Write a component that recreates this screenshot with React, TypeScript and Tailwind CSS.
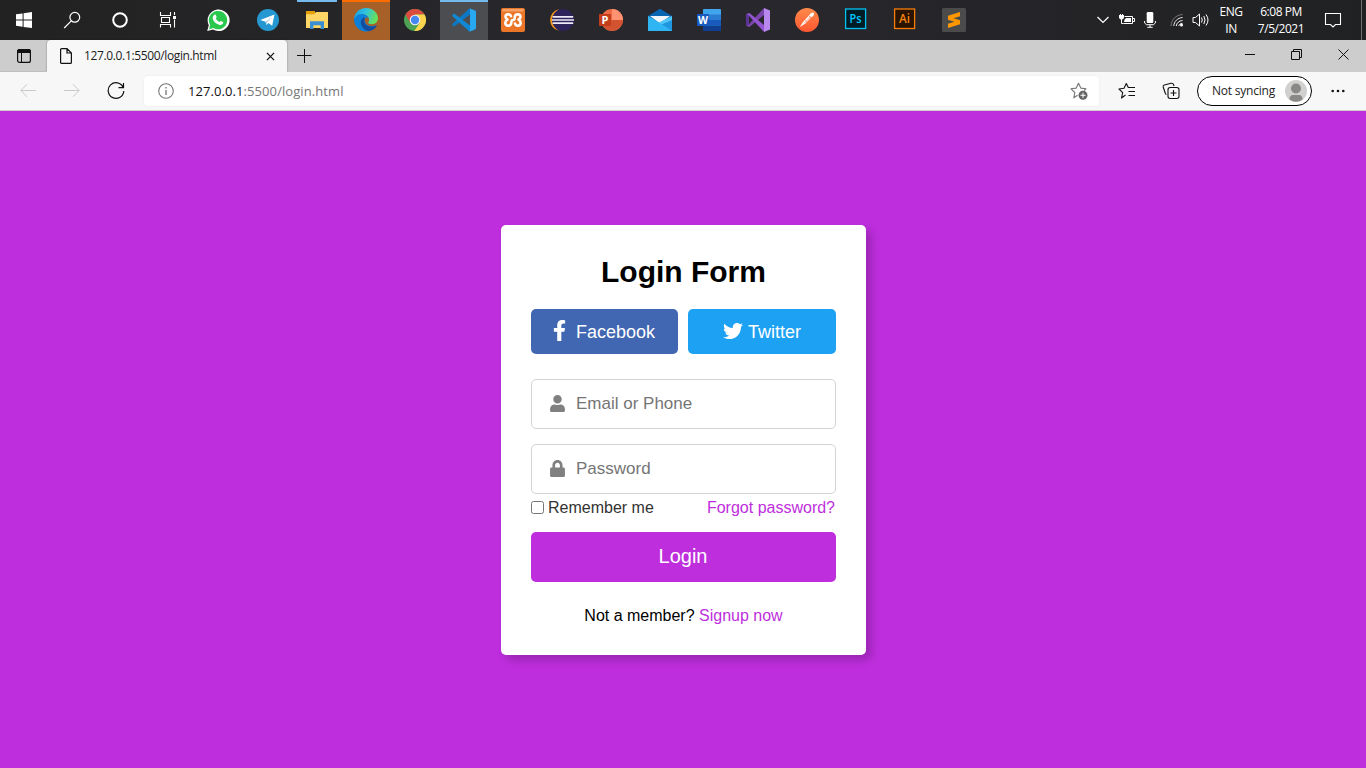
import type { ReactNode } from "react";
import { FaFacebookF, FaTwitter, FaUser, FaLock } from "react-icons/fa";

function Glyph({ children, className = "" }: { children: ReactNode; className?: string }) {
  return (
    <svg viewBox="0 0 24 24" className={"block h-6 w-6 shrink-0 " + className} fill="none">
      {children}
    </svg>
  );
}

function Cell({ children, className = "" }: { children: ReactNode; className?: string }) {
  return <div className={"flex h-10 w-12 shrink-0 items-center justify-center " + className}>{children}</div>;
}

function Taskbar() {
  return (
    <header className="flex h-10 w-full bg-linear-to-r from-[#222222] via-[#29282e] to-[#202122] font-['Open_Sans',sans-serif] text-white">
      <div className="flex">
        <Cell>
          <Glyph>
            <path d="M4 6.3 10.6 5.4V11.5H4zM11.6 5.2 20 4V11.5H11.6zM4 12.5H10.6V18.7L4 17.8zM11.6 12.5H20V20L11.6 18.9z" fill="#fff" />
          </Glyph>
        </Cell>
        <Cell>
          <Glyph>
            <circle cx="14.8" cy="9.3" r="4.9" stroke="#fff" strokeWidth="1.2" />
            <path d="M11.3 12.8 4.2 20" stroke="#fff" strokeWidth="1.2" />
          </Glyph>
        </Cell>
        <Cell>
          <Glyph>
            <circle cx="12" cy="12" r="6.8" stroke="#fff" strokeWidth="2" />
          </Glyph>
        </Cell>
        <Cell>
          <Glyph>
            <path d="M4.5 4V7.5H14.5V4M4.5 19.500V16.500H14.500V19.500M5.500 9.500H13.500V14.500H5.500zM18.500 4V7M18.500 11.500V19.500" stroke="#fff" strokeWidth="1.1" />
            <path d="M17 8H20V11H17z" fill="#fff" />
          </Glyph>
        </Cell>
      </div>
      <div className="ml-[3px] flex gap-px">
        <Cell>
          <Glyph className="-translate-x-px">
            <path d="M1.200 23 2.800 17.200A11 10.800 0 1 1 7 21.600z" fill="#fff" />
            <path d="M3 21.200 4.200 17A9.200 9.200 0 1 1 7.400 20.100z" fill="#2ac84d" />
            <path d="M8.300 6.800c.5-.5 1.200-.4 1.500.2l.8 1.900c.2.6-.8 1.300-.8 1.700.7 1.500 1.900 2.600 3.500 3.300.5.100 1.100-1.200 1.600-1l2.100 1c.4.200.3.900.1 1.400-.7 1.500-2.500 1.900-4 1.400-3.200-1-5.600-3.300-6.300-6-.3-1.500.4-3 1.500-3.900z" fill="#fff" />
          </Glyph>
        </Cell>
        <Cell>
          <Glyph>
            <circle cx="12" cy="12" r="11" fill="#2598d2" />
            <path d="M4.300 12 18.500 6.500 16.200 17.800 12.300 15.100 10.400 17.100 9.600 13.700z" fill="#fff" />
            <path d="M9.600 13.700 15.800 8.900 10.900 14.500 10.400 17.100z" fill="#a8cde2" />
          </Glyph>
        </Cell>
        <Cell className="relative">
          <div className="absolute left-1 top-0 h-[2px] w-10 bg-[#76b9ed]" />
          <Glyph>
            <path d="M1 3H10V7H1z" fill="#e3a008" />
            <path d="M1 6.200H9L11 4H23V20H1z" fill="#fdd665" />
            <path d="M5 13.300H19V21H15.500V17.500H8.500V21H5z" fill="#3a8fd3" />
            <path d="M8.500 17.500H15.500V20H8.500z" fill="#fdd665" />
          </Glyph>
        </Cell>
        <Cell className="relative bg-[#a86029]">
          <div className="absolute left-0 top-0 h-[2px] w-12 bg-[#ff6d00]" />
          <Glyph>
            <defs>
              <linearGradient id="edge-top" x1="0" y1="0" x2="1" y2="0.300">
                <stop offset="0" stopColor="#1797e0" />
                <stop offset=".5" stopColor="#2fc2df" />
                <stop offset="1" stopColor="#66e05d" />
              </linearGradient>
            </defs>
            <path d="M0 12C0 7 4 5 8 6c5 0 7 3 6.500 6.500L14 15.500Q16.500 18 22.800 16.800A12 12 0 0 1 0 12z" fill="#0c7fd8" />
            <path d="M0 12C0 5 5 0 12 0c7 0 12 5 12 10 0 4-3 6.300-6.600 6.300-2.200 0-3.600-.7-3.400-1.500.3-.8 1-1.300 1-2.800C15 8 11.500 5.700 7.800 5.900 3.500 6 .5 9 0 12z" fill="url(#edge-top)" />
            <path d="M9.500 9.700C6 11.500 6 16 9 20c3.200 3.800 9 4.500 13.600-1.800.3-.5 0-.9-.6-.6C18 19.300 13.500 18.800 11.500 16.300 10 14.500 9.800 12 11.200 9.800z" fill="#124e9f" />
            <path d="M12 9.600c-2 1.800-1.500 5.100.500 6.600 2.500 2.200 6.500 2.200 9.800 1L23 15.200C20.600 17 16 17 14.200 15.300c-.7-.7.8-1.400.8-3.500-.3-1.300-1.400-2.400-3-2.200z" fill="#a86029" />
          </Glyph>
        </Cell>
        <Cell>
          <Glyph>
            <circle cx="12" cy="12" r="11" fill="#4ca354" />
            <path d="M2.500 6.500A11 11 0 0 1 21.500 6.500H12L7.200 14.700z" fill="#dc4b3e" />
            <path d="M21.500 6.500A11 11 0 0 1 11.300 23L16.800 14.700 12 6.500z" fill="#fdd44b" />
            <circle cx="12" cy="12" r="5.300" fill="#f2f2f2" />
            <circle cx="12" cy="12" r="4.200" fill="#4688f1" />
          </Glyph>
        </Cell>
        <Cell className="relative bg-[#4c4d50]">
          <div className="absolute left-0 top-0 h-[2px] w-12 bg-[#76b9ed]" />
          <Glyph>
            <path d="M18 0V6.600L2.500 18.200Q1.500 18.600.5 17.400 0 16.300.8 15.500z" fill="#0a78c2" />
            <path d="M2.500 5.800Q1.500 5.400.5 6.600 0 7.700.8 8.500L18 24V17.400z" fill="#1188d3" />
            <path d="M17.500.2 23 2.600Q24 3 24 4V20Q24 21 23 21.400L17.500 23.800Q18 23.500 18 22V2Q18 .5 17.500.2z" fill="#29a8f2" />
          </Glyph>
        </Cell>
        <Cell>
          <Glyph>
            <rect width="24" height="24" rx="2" fill="#ec7628" />
            <path d="M1.500 1H22.500V3.500H1.500z" fill="#f4a069" />
            <path
              d="M10 8.200Q9.500 6.200 7 6.200 4.500 6.300 4.500 8.800 4.500 10.500 6.500 11.500 4.300 12.700 4.300 15 4.500 17.700 7.200 17.700 10.200 17.600 10.300 14.500 10.300 12 12 12 13.800 11.800 13.800 9.200 14 6.200 16.700 6.200 19.500 6.300 19.500 8.800 19.500 10.500 17.500 11.500 19.700 12.700 19.700 15 19.500 17.700 16.800 17.700 14.400 17.600 14 15.500"
              stroke="#fff"
              strokeWidth="2.600"
              strokeLinecap="round"
              strokeLinejoin="round"
            />
          </Glyph>
        </Cell>
        <Cell>
          <Glyph>
            <path d="M9 1.200A11 11 0 0 0 9 22.800 14 14 0 0 1 9 1.200z" fill="#f79a18" />
            <circle cx="13" cy="12" r="11" fill="#2e235b" />
            <path d="M2.600 8.800H23.200M2 12H24M2.600 15.200H23.200" stroke="#eeeaf5" strokeWidth="1.700" />
          </Glyph>
        </Cell>
        <Cell>
          <Glyph>
            <circle cx="13" cy="12" r="11" fill="#ed6c47" />
            <path d="M13 1A11 11 0 0 1 24 12H13z" fill="#ff9270" />
            <path d="M24 12A11 11 0 0 1 2.400 14.500L13 12z" fill="#d35230" />
            <rect y="6" width="12" height="12" rx=".8" fill="#c43e1c" />
            <text x="6" y="15.800" fontSize="11" fontWeight="700" textAnchor="middle" fill="#fff">P</text>
          </Glyph>
        </Cell>
        <Cell>
          <Glyph>
            <path d="M0 8 12 .8 24 8 12 16z" fill="#0865b2" />
            <path d="M2 8H22L12 15.500z" fill="#f1f5f9" />
            <path d="M0 8 12 15 24 8V23H0z" fill="#35b8f1" />
            <path d="M24 8V23L11 14.700z" fill="#2196e0" />
            <path d="M0 8 24 23H0z" fill="#2fb4f4" />
            <path d="M11 14.800 24 8V12L13.500 16.500z" fill="#4fc6fa" />
          </Glyph>
        </Cell>
        <Cell>
          <Glyph>
            <rect x="6" y="1" width="18" height="22" rx=".8" fill="#41a5ee" />
            <path d="M6 6.500H24V12H6z" fill="#2b7cd3" />
            <path d="M6 12H24V17.500H6z" fill="#185abd" />
            <path d="M6 17.500H24V23H6z" fill="#103f91" />
            <rect y="6" width="12" height="12" rx=".8" fill="#185abd" />
            <text x="6" y="15.800" fontSize="11" fontWeight="700" textAnchor="middle" fill="#fff" textLength="10" lengthAdjust="spacingAndGlyphs">W</text>
          </Glyph>
        </Cell>
        <Cell>
          <Glyph>
            <path d="M0 6.500 2.500 5.300 3 8.500V15.500L2.500 18.700 0 17.500z" fill="#5b3295" />
            <path d="M18 0V7L4 18.500Q3 19.200 2 18.600L0 17.500Q1.500 17.800 2.500 16.800z" fill="#7a45ad" />
            <path d="M18 24V17L4 5.500Q3 4.800 2 5.400L0 6.500Q1.500 6.200 2.500 7.200z" fill="#9454d1" />
            <path d="M18 0 24 2.500V21.500L18 24z" fill="#b888ee" />
          </Glyph>
        </Cell>
        <Cell>
          <Glyph>
            <defs>
              <linearGradient id="pm" x1="0" y1="0" x2="0" y2="1">
                <stop offset="0" stopColor="#ff8a4a" />
                <stop offset="1" stopColor="#ff5630" />
              </linearGradient>
            </defs>
            <circle cx="12" cy="12" r="12" fill="url(#pm)" />
            <path d="M4.800 19 8 14 14 7.500Q15 5.500 17 4.700 18.500 4.300 19 5.500 19.300 7 17.500 8.500L16 9.500 10.500 15.500z" fill="#fff" />
            <path d="M9 15.500 15.500 8.500M13.500 7.500 16 9.800M10.500 12.500 12.500 14.500" stroke="#fb7a50" strokeWidth=".7" />
          </Glyph>
        </Cell>
        <Cell>
          <Glyph>
            <rect x="1.600" y="1" width="20" height="19.500" fill="#001d26" stroke="#00c3f4" strokeWidth="1.300" />
            <text x="11.600" y="15" fontSize="12" fontWeight="600" textAnchor="middle" fill="#00c8ff" textLength="12" lengthAdjust="spacingAndGlyphs">Ps</text>
          </Glyph>
        </Cell>
        <Cell>
          <Glyph>
            <rect x="1.600" y="1" width="20" height="19.500" fill="#281400" stroke="#f57c08" strokeWidth="1.300" />
            <text x="11.600" y="15" fontSize="12" fontWeight="600" textAnchor="middle" fill="#f58212" textLength="11" lengthAdjust="spacingAndGlyphs">Ai</text>
          </Glyph>
        </Cell>
        <Cell>
          <Glyph>
            <rect width="24" height="24" rx="1.500" fill="#4b4b4b" />
            <path d="M6 7.700 18 4V8.200L11.500 10.300 18 12.300V16.200L6 20V15.800L12.500 13.700 6 11.700z" fill="#ff9800" />
          </Glyph>
        </Cell>
      </div>
      <div className="ml-auto flex items-center">
        <svg viewBox="0 0 12 12" className="mr-2.5 h-3 w-3" fill="none">
          <path d="M.5 3 6 8.500 11.500 3" stroke="#fff" strokeWidth="1.200" />
        </svg>
        <svg viewBox="0 0 16 12" className="mr-[9px] h-3 w-4" fill="none">
          <path d="M5.500 2.500H13.500V9.500H4.500M13.500 4.500H15.500V7.500H13.500M1.500 -1V2M3.500 -1V2M2.500 5V9.500H4.500" stroke="#fff" strokeWidth="1" />
          <path d="M0 1H5V4L3.500 5.500H1.500L0 4zM7 4H12V8H5Q5 5.500 7 4z" fill="#fff" />
        </svg>
        <svg viewBox="0 0 12 16" className="mr-[14px] h-4 w-3" fill="none">
          <rect x="2.700" y="0" width="6.600" height="11" rx="1.300" fill="#fff" />
          <path d="M.6 9V11L2.500 12.700H9.500L11.400 11V9M6 12.700V15.300M3.300 15.300H8.700" stroke="#fff" />
        </svg>
        <svg viewBox="0 0 14 14" className="mr-2 h-3.5 w-3.5" fill="none">
          <path d="M1 13C1.300 6.500 6 2 12.500 1.500" stroke="#777" />
          <path d="M3.800 13C4 8.500 7.500 5 12.500 4.500M6.300 13C6.500 10 9 7.800 12.500 7.500M8.800 13C9 11.500 10.500 10.500 12.500 10.300" stroke="#eee" />
          <circle cx="11.500" cy="12" r="1.500" fill="#fff" />
        </svg>
        <svg viewBox="0 0 18 14" className="mr-[7px] h-3.5 w-[18px]" fill="none">
          <path d="M1 4.500H3.500L7.500 1V13L3.500 9.500H1zM9.500 4.500Q11 7 9.500 9.500M11.800 3Q14.300 7 11.800 11M14 1.500Q18 7 14 12.500" stroke="#fff" />
        </svg>
        <div className="mr-3 w-7 text-center text-xs leading-[17px] tracking-[-0.4px]">
          <div>ENG</div>
          <div>IN</div>
        </div>
        <div className="mr-[19px] w-12 whitespace-nowrap text-center text-xs leading-[17px] tracking-[-0.45px]">
          <div className="-mt-px">6:08 PM</div>
          <div>7/5/2021</div>
        </div>
        <svg viewBox="0 0 18 18" className="mr-[19px] h-[18px] w-[18px]" fill="none">
          <path d="M1.500 2.500H16.500V13.500H11.500L9 16 6.500 13.500H1.500z" stroke="#fff" strokeWidth="1.100" />
        </svg>
        <div className="mr-1 h-10 w-px bg-[#6d6e70]" />
      </div>
    </header>
  );
}

function TabStrip() {
  return (
    <div className="flex h-8 bg-[#cdcdcd] font-['Open_Sans',sans-serif]">
      <div className="flex w-[47px] items-center justify-center rounded-br border-b border-[#bdbdbd] pl-px">
        <svg viewBox="0 0 16 16" className="h-4 w-4" fill="none">
          <rect x="1.600" y="1.600" width="12.800" height="12.800" rx="2" stroke="#111" strokeWidth="1.200" />
          <path d="M1.500 3Q1.500 1.500 3 1.500H13Q14.500 1.500 14.500 3V4.500H1.500z" fill="#111" stroke="#111" />
          <path d="M5.500 5V14" stroke="#111" />
        </svg>
      </div>
      <div className="flex w-[240px] items-center rounded-t bg-[#f7f7f7] pl-[13px] shadow-[0_0_2px_rgba(0,0,0,0.4)] [clip-path:inset(-2px_-2px_0_-2px)]">
        <svg viewBox="0 0 12 16" className="h-4 w-3" fill="none">
          <path d="M.6 1.600Q.6.600 1.600.600H7L11.400 5V14.400Q11.400 15.400 10.400 15.400H1.600Q.6 15.400.6 14.400zM7 .6V5H11.400" stroke="#111" strokeWidth="1.200" />
        </svg>
        <span className="ml-3 w-[180px] whitespace-nowrap text-xs tracking-[-0.36px] text-[#1c1c1c]">127.0.0.1:5500/login.html</span>
        <svg viewBox="0 0 10 10" className="ml-[2px] mt-px h-[9px] w-[9px]">
          <path d="M1 1 9 9M9 1 1 9" stroke="#111" strokeWidth="1.400" />
        </svg>
      </div>
      <svg viewBox="0 0 16 16" className="ml-[9px] mt-2 h-4 w-4">
        <path d="M8.500 1V15M1 7.500H15.500" stroke="#111" />
      </svg>
      <div className="ml-auto flex items-center pr-[17px] pb-[4px]">
        <svg viewBox="0 0 10 10" className="mr-9 h-2.5 w-2.5">
          <path d="M0 5.500H10" stroke="#111" />
        </svg>
        <svg viewBox="0 0 11 11" className="mr-9 h-[11px] w-[11px]" fill="none">
          <path d="M.5 2.500H8.500V10.500H.5zM2.500 2.500V.5H10.500V8.500H8.500" stroke="#111" />
        </svg>
        <svg viewBox="0 0 11 11" className="h-[11px] w-[11px]">
          <path d="M.5.5 10.500 10.500M10.500.5.5 10.500" stroke="#111" />
        </svg>
      </div>
    </div>
  );
}

function Toolbar() {
  return (
    <div className="flex h-[39px] items-center border-b border-[#cfcfcf] bg-[#f7f7f7] font-['Open_Sans',sans-serif]">
      <svg viewBox="0 0 16 14" className="ml-5 h-3.5 w-4" fill="none">
        <path d="M16 6.500H1M7 .3.800 6.500 7 12.700" stroke="#c9c9c9" />
      </svg>
      <svg viewBox="0 0 16 14" className="ml-7 h-3.5 w-4" fill="none">
        <path d="M0 6.500H15M9 .3 15.200 6.500 9 12.700" stroke="#c9c9c9" />
      </svg>
      <svg viewBox="0 0 18 18" className="ml-[27px] h-[18px] w-[18px]" fill="none">
        <path d="M16.200 5.500A7.800 7.800 0 1 0 16.800 9M16.500 1V5.700H11.500" stroke="#111" strokeWidth="1.200" />
      </svg>
      <div className="ml-[19px] flex h-[30px] w-[955px] items-center rounded bg-white pl-[14px] pr-[11px] shadow-[0_0_2px_rgba(0,0,0,0.08)]">
        <svg viewBox="0 0 16 16" className="h-4 w-4" fill="none">
          <circle cx="8" cy="8" r="7.300" stroke="#777" strokeWidth="1.100" />
          <path d="M8 7V12M8 4V5.500" stroke="#777" strokeWidth="1.300" />
        </svg>
        <span className="ml-[14px] mt-px whitespace-nowrap text-[13px] tracking-[0.08px] text-[#777]">
          <span className="text-[#111]">127.0.0.1</span>:5500/login.html
        </span>
        <svg viewBox="0 0 18 18" className="ml-auto h-[18px] w-[18px]" fill="none">
          <path d="M7.500 13.200 3.800 15.800 4.800 10.500 1 6.800 6.200 6.100 8.500 1.200 10.800 6.100 16 6.800 14 8.500" stroke="#777" strokeWidth="1.100" strokeLinejoin="round" />
          <circle cx="13" cy="13.300" r="4.500" fill="#666" />
          <path d="M13 10.800V15.800M10.500 13.300H15.500" stroke="#fff" />
        </svg>
      </div>
      <svg viewBox="0 0 18 18" className="ml-[19px] h-[18px] w-[18px]" fill="none">
        <path d="M7.500 13 3.500 16 4.700 10.700 1 7 6 6.300 8.300 1.500 10.300 5.500H17M10.500 9.500H17M10.500 13.500H17" stroke="#111" strokeWidth="1.100" strokeLinejoin="round" />
      </svg>
      <svg viewBox="0 0 18 18" className="ml-[26px] h-[18px] w-[18px]" fill="none">
        <path d="M4.500 12.500Q3.500 12.500 3.200 11L1.200 5Q.8 3.500 2.300 3L9 1.300Q11 .8 11.500 2.500L12 4" stroke="#111" strokeWidth="1.100" />
        <rect x="6" y="5.500" width="11" height="11" rx="2.200" stroke="#111" strokeWidth="1.100" />
        <path d="M11.500 8V14M8.500 11H14.500" stroke="#111" strokeWidth="1.100" />
      </svg>
      <div className="ml-[17px] flex h-[30px] w-[115px] items-center rounded-full border border-black bg-white pl-[14px] pr-1">
        <span className="whitespace-nowrap text-xs tracking-[-0.22px] text-[#222]">Not syncing</span>
        <svg viewBox="0 0 22 22" className="ml-auto h-[22px] w-[22px]">
          <circle cx="11" cy="11" r="11" fill="#d2d0ce" />
          <circle cx="11" cy="8.500" r="5" fill="#8a8886" />
          <path d="M4.500 19.500Q4.500 15 8 15H14Q17.500 15 17.500 19.500Q11 24 4.500 19.500z" fill="#8a8886" />
        </svg>
      </div>
      <svg viewBox="0 0 14 4" className="ml-[19px] h-1 w-3.5" fill="#111">
        <circle cx="1.700" cy="2" r="1.300" />
        <circle cx="7" cy="2" r="1.300" />
        <circle cx="12.300" cy="2" r="1.300" />
      </svg>
    </div>
  );
}

function LoginForm() {
  return (
    <section className="h-[430px] w-[365px] rounded-[5px] bg-white px-[30px] pt-[26px] shadow-[5px_5px_10px_rgba(0,0,0,0.2)]">
      <h1 className="text-center text-[30px] font-bold leading-[42px] text-black">Login Form</h1>
      <div className="mt-4 flex gap-2.5">
        <button className="flex h-[45px] w-[147px] items-center rounded-[5px] bg-[#4267b2] pl-[18px] text-lg font-normal text-white">
          <FaFacebookF size={21} className="-translate-y-px" />
          <span className="ml-1.5">Facebook</span>
        </button>
        <button className="flex h-[45px] w-[148px] items-center rounded-[5px] bg-[#1da1f2] pl-[35px] text-lg text-white">
          <FaTwitter size={20} className="-translate-y-px" />
          <span className="ml-[5px]">Twitter</span>
        </button>
      </div>
      <div className="mt-[25px] flex h-[50px] items-center rounded-[5px] border border-[#d3d3d3] pl-[18px]">
        <FaUser className="h-[17px] w-[15px] -translate-y-px text-[#808080]" />
        <input className="ml-[11px] w-[230px] text-[17px] outline-none placeholder:text-[#757575]" placeholder="Email or Phone" />
      </div>
      <div className="mt-[15px] flex h-[50px] items-center rounded-[5px] border border-[#d3d3d3] pl-[18px]">
        <FaLock className="h-[17px] w-[15px] -translate-y-px text-[#808080]" />
        <input className="ml-[11px] w-[230px] text-[17px] outline-none placeholder:text-[#757575]" type="password" placeholder="Password" />
      </div>
      <div className="flex h-[27px] items-center justify-between pr-px text-base">
        <label className="flex items-center text-[#333]">
          <input type="checkbox" className="mr-[4px] h-[13px] w-[13px]" />
          Remember me
        </label>
        <a className="text-[#be2edd]">Forgot password?</a>
      </div>
      <button className="mt-[11px] flex h-[50px] w-full items-center justify-center rounded-[5px] bg-[#be2edd] pb-0.5 pr-px text-xl text-white">Login</button>
      <p className="mt-[22px] text-center text-base text-black">
        Not a member? <a className="text-[#be2edd]">Signup now</a>
      </p>
    </section>
  );
}

export default function App() {
  return (
    <div className="flex h-screen w-full flex-col overflow-hidden bg-[#be2edd]">
      <Taskbar />
      <TabStrip />
      <Toolbar />
      <main className="flex flex-1 justify-center pl-px pt-[114px] font-['Liberation_Sans',Arial,sans-serif]">
        <LoginForm />
      </main>
    </div>
  );
}
